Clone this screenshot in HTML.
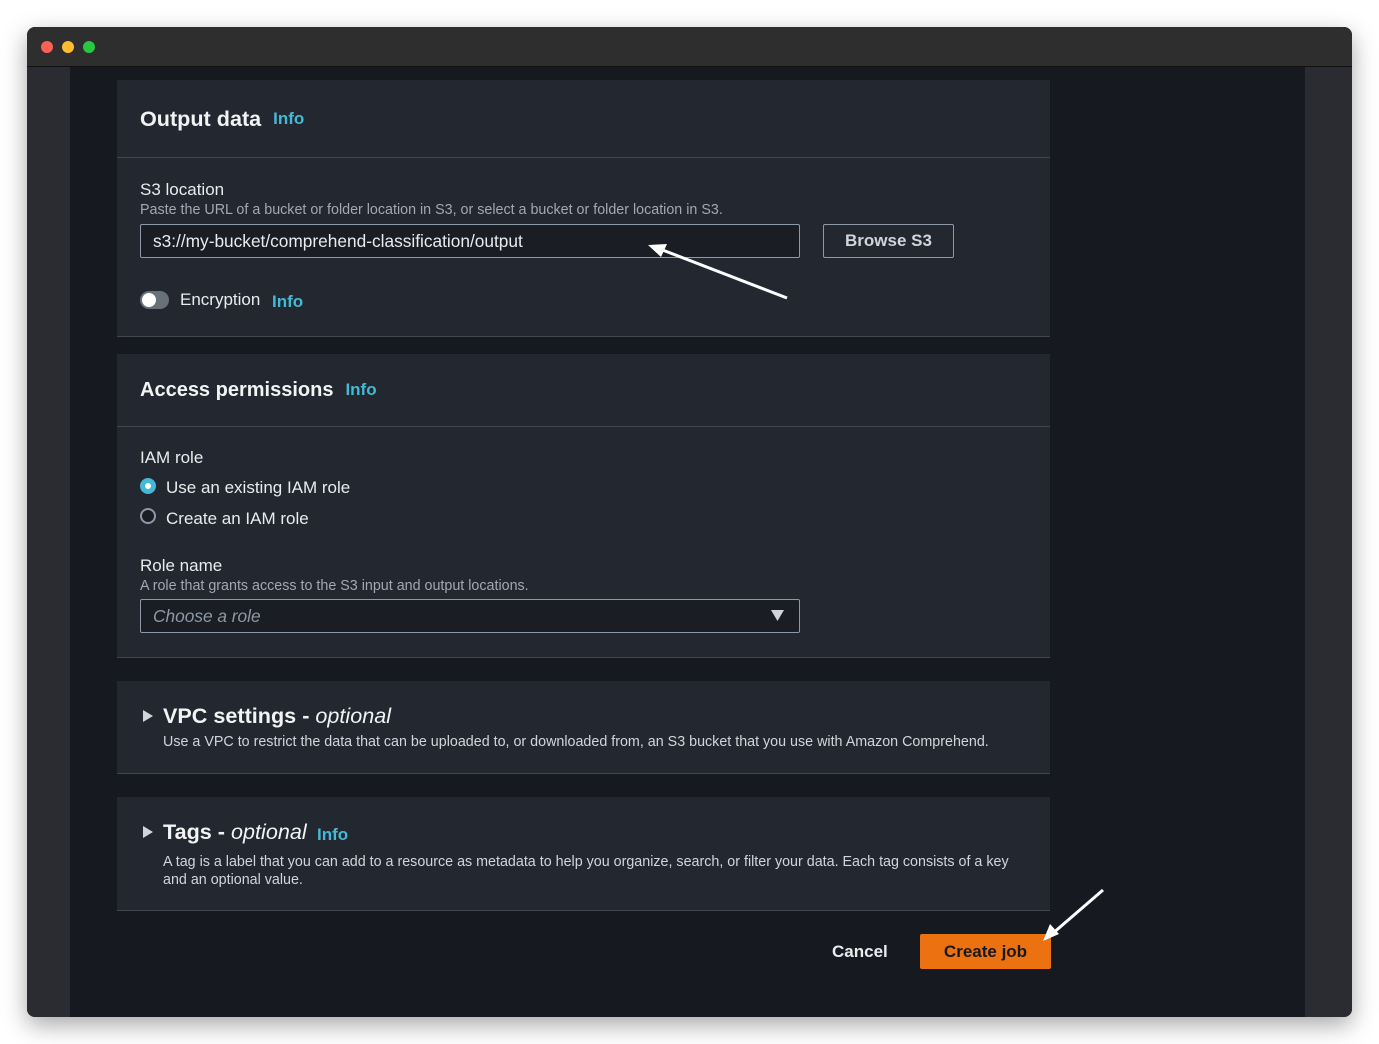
<!DOCTYPE html>
<html><head><meta charset="utf-8"><style>
*{box-sizing:border-box;margin:0;padding:0}
body{width:1379px;height:1044px;background:#fff;font-family:"Liberation Sans",sans-serif;position:relative;overflow:hidden;color:#d1d5db}
.win{position:absolute;left:27px;top:27px;width:1325px;height:990px;border-radius:8px;overflow:hidden;background:#16191f;box-shadow:0 8px 24px rgba(0,0,0,.35)}
.tb{position:absolute;left:0;top:0;width:100%;height:40px;background:#2e2e2e;border-bottom:1px solid #111}
.dot{position:absolute;top:14px;width:12px;height:12px;border-radius:50%}
.ls{position:absolute;left:0;top:40px;width:43px;bottom:0;background:#2a2c31}
.rs{position:absolute;right:0;top:40px;width:47px;bottom:0;background:#2a2c31}
.p{position:absolute;left:90px;width:933px;background:#232730;border-bottom:1px solid #414750}
.ph{border-bottom:1px solid #414750;padding:0 23px;display:flex;align-items:center}
.h{font-size:21.6px;font-weight:bold;color:#f2f3f3}
.info{color:#44b9d6;font-weight:bold;font-size:17px;margin-left:12px}
.lbl{position:absolute;left:23px;font-size:17px;color:#e9ebed}
.desc{position:absolute;left:23px;font-size:14.3px;color:#a1a8b3}
.inp{position:absolute;left:23px;width:660px;height:34px;border:1px solid #8d99a8;border-radius:2px;background:#1a1d23;font-size:17.3px;padding:6px 12px;color:#e9ebed}
.abs{position:absolute}
</style></head><body>
<div class="win">
 <div class="tb"><div class="dot" style="left:14px;background:#fe5f57"></div><div class="dot" style="left:35px;background:#febc2e"></div><div class="dot" style="left:56px;background:#28c840"></div></div>
 <div class="ls"></div><div class="rs"></div>

 <div class="p" style="top:53px;height:257px">
  <div class="ph" style="height:78px"><span class="h">Output data</span><span class="info">Info</span></div>
  <div class="lbl" style="top:100px">S3 location</div>
  <div class="desc" style="top:122px">Paste the URL of a bucket or folder location in S3, or select a bucket or folder location in S3.</div>
  <div class="inp" style="top:144px">s3://my-bucket/comprehend-classification/output</div>
  <div class="abs" style="left:706px;top:144px;width:131px;height:34px;border:1px solid #8d99a8;border-radius:2px;color:#d1d5db;font-weight:bold;font-size:17px;text-align:center;line-height:32px">Browse S3</div>
  <div class="abs" style="left:23px;top:211px;width:29px;height:18px;border-radius:9px;background:#687078"><div style="position:absolute;left:2px;top:2px;width:14px;height:14px;border-radius:50%;background:#fff"></div></div>
  <div class="abs" style="left:63px;top:210px;font-size:17px;color:#e9ebed">Encryption</div>
  <div class="abs info" style="left:143px;top:212px;margin:0;margin-left:12px">Info</div>
 </div>

 <div class="p" style="top:327px;height:304px">
  <div class="ph" style="height:73px"><span class="h" style="font-size:20px">Access permissions</span><span class="info">Info</span></div>
  <div class="lbl" style="top:94px">IAM role</div>
  <div class="abs" style="left:23px;top:124px;width:16px;height:16px;border-radius:50%;background:#44b9d6"><div style="position:absolute;left:5px;top:5px;width:6px;height:6px;border-radius:50%;background:#fff"></div></div>
  <div class="abs" style="left:49px;top:124px;font-size:17px;color:#e9ebed">Use an existing IAM role</div>
  <div class="abs" style="left:23px;top:154px;width:16px;height:16px;border-radius:50%;border:2px solid #8d99a8;background:#1a1d23"></div>
  <div class="abs" style="left:49px;top:155px;font-size:17px;color:#e9ebed">Create an IAM role</div>
  <div class="lbl" style="top:202px">Role name</div>
  <div class="desc" style="top:224px">A role that grants access to the S3 input and output locations.</div>
  <div class="inp" style="top:245px;font-style:italic;color:#8d99a8">Choose a role</div>
  <svg class="abs" style="left:654px;top:256px" width="13" height="11"><path d="M0 0H13L6.5 11Z" fill="#d1d5db"/></svg>
 </div>

 <div class="p" style="top:654px;height:93px">
  <svg class="abs" style="left:26px;top:29px" width="10" height="12"><path d="M0 0L10 6L0 12Z" fill="#d1d5db"/></svg>
  <div class="abs h" style="left:46px;top:22px">VPC settings - <i style="font-weight:normal">optional</i></div>
  <div class="abs" style="left:46px;top:53px;font-size:14.3px;color:#d1d5db">Use a VPC to restrict the data that can be uploaded to, or downloaded from, an S3 bucket that you use with Amazon Comprehend.</div>
 </div>

 <div class="p" style="top:770px;height:114px">
  <svg class="abs" style="left:26px;top:29px" width="10" height="12"><path d="M0 0L10 6L0 12Z" fill="#d1d5db"/></svg>
  <div class="abs h" style="left:46px;top:22px">Tags - <i style="font-weight:normal">optional</i></div>
  <div class="abs info" style="left:200px;top:28px;margin:0">Info</div>
  <div class="abs" style="left:46px;top:56px;width:870px;font-size:14.3px;line-height:18px;color:#d1d5db">A tag is a label that you can add to a resource as metadata to help you organize, search, or filter your data. Each tag consists of a key and an optional value.</div>
 </div>

 <div class="abs" style="left:805px;top:915px;font-weight:bold;font-size:17px;color:#e9ebed">Cancel</div>
 <div class="abs" style="left:893px;top:907px;width:131px;height:35px;background:#ec7211;border-radius:2px;color:#16191f;font-weight:bold;font-size:17px;text-align:center;line-height:35px">Create job</div>
</div>
<svg class="abs" style="left:0;top:0" width="1379" height="1044">
 <path d="M787 298L660 249" stroke="#fff" stroke-width="3"/>
 <path d="M648 245L667 244L661 257Z" fill="#fff"/>
 <path d="M1103 890L1052 934" stroke="#fff" stroke-width="3"/>
 <path d="M1043 941L1050 924L1059 934Z" fill="#fff"/>
</svg>
</body></html>
